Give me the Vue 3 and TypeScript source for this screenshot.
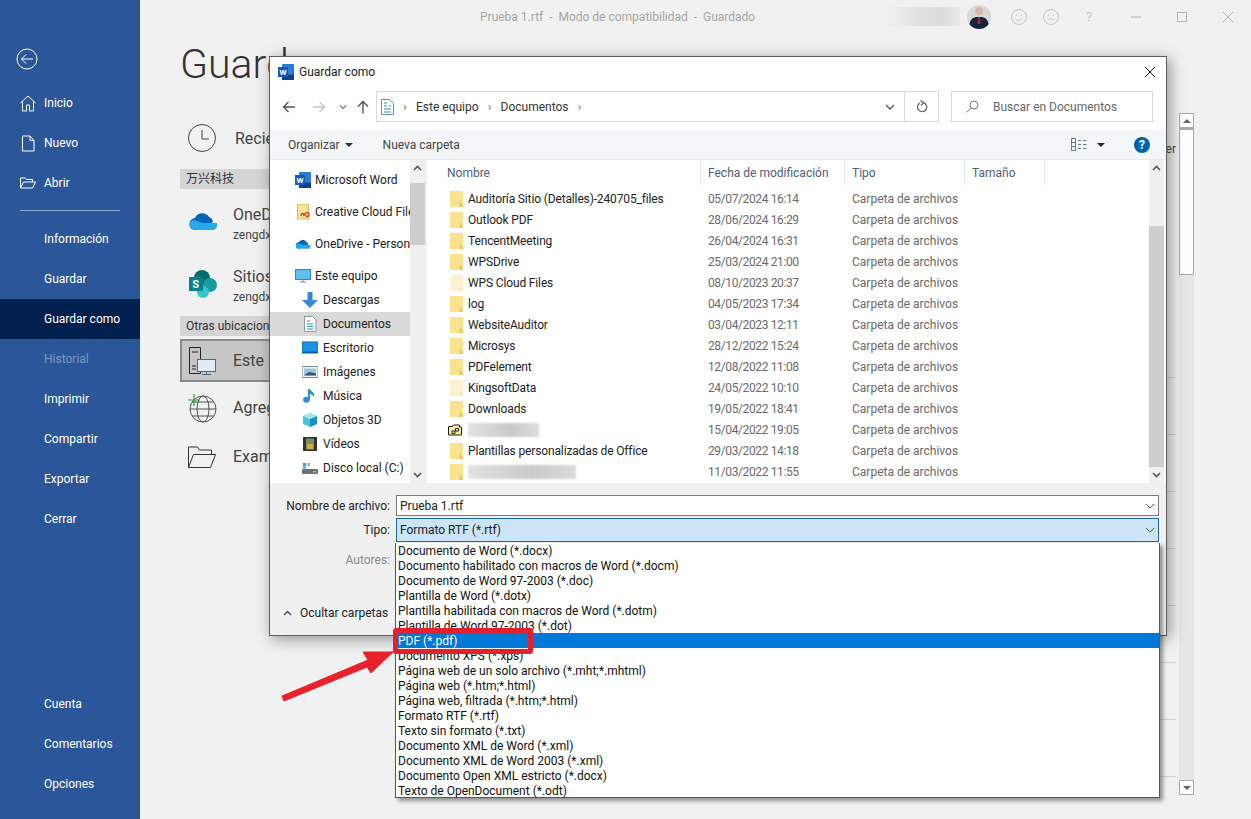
<script setup lang="ts">
const topNav = [
  { label: 'Información' },
  { label: 'Guardar' },
  { label: 'Guardar como', active: true },
  { label: 'Historial', muted: true },
  { label: 'Imprimir' },
  { label: 'Compartir' },
  { label: 'Exportar' },
  { label: 'Cerrar' },
]
const bottomNav = ['Cuenta', 'Comentarios', 'Opciones']

const navTree = [
  { label: 'Descargas', icon: 'down' },
  { label: 'Documentos', icon: 'doc', active: true },
  { label: 'Escritorio', icon: 'desk' },
  { label: 'Imágenes', icon: 'img' },
  { label: 'Música', icon: 'music' },
  { label: 'Objetos 3D', icon: 'cube' },
  { label: 'Vídeos', icon: 'film' },
  { label: 'Disco local (C:)', icon: 'disk' },
]

interface FileRow { name: string; date: string; pale?: boolean; blur?: number; shared?: boolean }
const files: FileRow[] = [
  { name: 'Auditoría Sitio (Detalles)-240705_files', date: '05/07/2024 16:14' },
  { name: 'Outlook PDF', date: '28/06/2024 16:29' },
  { name: 'TencentMeeting', date: '26/04/2024 16:31' },
  { name: 'WPSDrive', date: '25/03/2024 21:00' },
  { name: 'WPS Cloud Files', date: '08/10/2023 20:37', pale: true },
  { name: 'log', date: '04/05/2023 17:34' },
  { name: 'WebsiteAuditor', date: '03/04/2023 12:11' },
  { name: 'Microsys', date: '28/12/2022 15:24' },
  { name: 'PDFelement', date: '12/08/2022 11:08' },
  { name: 'KingsoftData', date: '24/05/2022 10:10', pale: true },
  { name: 'Downloads', date: '19/05/2022 18:41' },
  { name: '', date: '15/04/2022 19:05', blur: 71, shared: true },
  { name: 'Plantillas personalizadas de Office', date: '29/03/2022 14:18' },
  { name: '', date: '11/03/2022 11:55', blur: 108 },
]

const types = [
  'Documento de Word (*.docx)',
  'Documento habilitado con macros de Word (*.docm)',
  'Documento de Word 97-2003 (*.doc)',
  'Plantilla de Word (*.dotx)',
  'Plantilla habilitada con macros de Word (*.dotm)',
  'Plantilla de Word 97-2003 (*.dot)',
  'PDF (*.pdf)',
  'Documento XPS (*.xps)',
  'Página web de un solo archivo (*.mht;*.mhtml)',
  'Página web (*.htm;*.html)',
  'Página web, filtrada (*.htm;*.html)',
  'Formato RTF (*.rtf)',
  'Texto sin formato (*.txt)',
  'Documento XML de Word (*.xml)',
  'Documento XML de Word 2003 (*.xml)',
  'Documento Open XML estricto (*.docx)',
  'Texto de OpenDocument (*.odt)',
]
const lineCount = 10
</script>

<template>
  <div class="app">
    <aside class="side">
      <div class="back">
        <svg width="22" height="22" viewBox="0 0 22 22" fill="none" stroke="#fff" stroke-width="1">
          <circle cx="11" cy="11" r="10" />
          <path d="M5.500 11H17M10 6.500 5.500 11l4.500 4.500" />
        </svg>
      </div>
      <div class="side-item">
        <svg class="side-ico" width="16" height="17" viewBox="0 0 16 17" fill="none" stroke="#fff" stroke-width="1">
          <path d="M.5 8 8 1l7.500 7M2.500 6.500v9.500h4v-6h3v6h4V6.500" />
        </svg>
        <span>Inicio</span>
      </div>
      <div class="side-item">
        <svg class="side-ico" width="16" height="17" viewBox="0 0 16 17" fill="none" stroke="#fff" stroke-width="1">
          <path d="M2.500 1v15h11.500V5.500L10 1zM10 1v4.500h4" />
        </svg>
        <span>Nuevo</span>
      </div>
      <div class="side-item">
        <svg class="side-ico" width="16" height="12" viewBox="0 0 16 12" fill="none" stroke="#fff" stroke-width="1">
          <path d="M.5 11V1h5l1 1.500h6V5M.5 11l3-6h12l-3 6z" />
        </svg>
        <span>Abrir</span>
      </div>
      <div class="side-sep"></div>
      <div
        v-for="n in topNav"
        :key="n.label"
        class="side-item"
        :class="{ active: n.active, muted: n.muted }"
      >
        <span>{{ n.label }}</span>
      </div>
      <div class="side-spacer"></div>
      <div v-for="n in bottomNav" :key="n" class="side-item">
        <span>{{ n }}</span>
      </div>
    </aside>

    <main class="main">
      <header class="topbar">
        <div class="doc-title">Prueba 1.rtf&nbsp; -&nbsp; Modo de compatibilidad&nbsp; -&nbsp; Guardado</div>
        <div class="user-blur"></div>
        <svg class="avatar" width="24" height="24" viewBox="0 0 24 24">
          <defs><clipPath id="av"><circle cx="12" cy="12" r="12" /></clipPath></defs>
          <g clip-path="url(#av)">
            <rect width="24" height="24" fill="#d8d8d8" />
            <path d="M2 24c0-9 3-11 7-12h6c4 1 7 3 7 12z" fill="#17233b" />
            <circle cx="12" cy="6" r="4" fill="#d9b7a3" />
            <path d="M11 12h2l.5 7h-3z" fill="#8a2f3a" />
          </g>
        </svg>
        <svg class="face first" width="18" height="18" viewBox="0 0 18 18" fill="none" stroke="#c4c4c4">
          <circle cx="9" cy="9" r="7.500" />
          <path d="M5.500 10.500c1.500 2.500 5.500 2.500 7 0M6.500 6.500v1.500M11.500 6.500v1.500" />
        </svg>
        <svg class="face" width="18" height="18" viewBox="0 0 18 18" fill="none" stroke="#c4c4c4">
          <circle cx="9" cy="9" r="7.500" />
          <path d="M5.500 12.500c1.500-2.500 5.500-2.500 7 0M6.500 6.500v1.500M11.500 6.500v1.500" />
        </svg>
        <span class="q">?</span>
        <svg class="win first-win" width="12" height="12" viewBox="0 0 12 12" stroke="#b4b4b4" fill="none"><path d="M1 6h10" /></svg>
        <svg class="win" width="12" height="12" viewBox="0 0 12 12" stroke="#b4b4b4" fill="none"><rect x="1.500" y="1.500" width="9" height="9" /></svg>
        <svg class="win" width="12" height="12" viewBox="0 0 12 12" stroke="#b4b4b4" fill="none"><path d="m1 1 10 10M11 1 1 11" /></svg>
      </header>

      <div class="main-body">
        <div class="places">
          <h1 class="heading">Guardar como</h1>
          <div class="place recent">
            <svg width="30" height="30" viewBox="0 0 30 30" fill="none" stroke="#444">
              <circle cx="15" cy="15" r="13.500" />
              <path d="M15 7v9h7" />
            </svg>
            <span class="place-name">Recientes</span>
          </div>
          <div class="band first-band">万兴科技</div>
          <div class="place cloud">
            <svg width="30" height="20" viewBox="0 0 30 20">
              <path d="M8 18a6 6 0 0 1-1-12 8 8 0 0 1 14-1 6 6 0 0 1 4 5z" fill="#0364b8" />
              <path d="M7 18a5 5 0 0 1-1-10l9 3 14 0c1 3-1 7-4 7z" fill="#28a8ea" />
            </svg>
            <div class="place-txt"><span class="place-name">OneDrive</span><small>zengdx@wondershare.cn</small></div>
          </div>
          <div class="place cloud">
            <svg width="30" height="30" viewBox="0 0 30 30">
              <circle cx="14" cy="9" r="8" fill="#036c70" />
              <circle cx="22" cy="16" r="7" fill="#1a9ba1" />
              <circle cx="15" cy="23" r="6" fill="#37c6d0" />
              <rect x="1" y="8" width="14" height="14" rx="1" fill="#038387" />
              <text x="4.200" y="19" font-size="11" font-weight="700" fill="#fff" font-family="Roboto, sans-serif">S</text>
            </svg>
            <div class="place-txt"><span class="place-name">Sitios</span><small>zengdx@wondershare.cn</small></div>
          </div>
          <div class="band second-band">Otras ubicaciones</div>
          <div class="place selected">
            <svg width="30" height="30" viewBox="0 0 30 30" fill="none" stroke="#222">
              <path d="M1.500 1.500h11v26h-11zM4 6h6M4 20h4M4 23h4" />
              <rect x="9.500" y="13.500" width="18" height="12" fill="#e4eaf2" stroke="#4a6a90" />
              <path d="M18.500 25.500V28M14 28.500h9" stroke="#4a6a90" />
            </svg>
            <span class="place-name">Este PC</span>
          </div>
          <div class="place plain">
            <svg width="30" height="30" viewBox="0 0 30 30" fill="none" stroke="#555">
              <circle cx="16" cy="16" r="13" />
              <ellipse cx="16" cy="16" rx="6" ry="13" />
              <path d="M3 16h26M5 9h22M5 23h22" />
              <path d="M7 1v12M1 7h12" stroke="#2f9e44" stroke-width="1.200" />
            </svg>
            <span class="place-name">Agregar un sitio</span>
          </div>
          <div class="place plain">
            <svg width="30" height="24" viewBox="0 0 30 24" fill="none" stroke="#333">
              <path d="M1.500 22.500V2h9l2 3h12v4M1.500 22.500l5-13h22l-5 13z" />
            </svg>
            <span class="place-name">Examinar</span>
          </div>
        </div>

        <div class="right">
          <div class="ver">Ver</div>
          <div class="line tall"></div>
          <div v-for="i in lineCount" :key="i" class="line"></div>
        </div>

        <div class="vbar">
          <div class="vbtn"><i class="up"></i></div>
          <div class="vthumb"></div>
          <div class="vtrack"></div>
          <div class="vbtn"><i class="dn"></i></div>
        </div>
      </div>
    </main>

    <section class="dlg">
      <div class="dlg-title">
        <svg width="16" height="16" viewBox="0 0 16 16">
          <rect x="4" width="12" height="16" rx="1" fill="#2b7cd3" />
          <rect x="4" y="10.500" width="12" height="5.500" fill="#103f91" />
          <rect y="3" width="10" height="10" fill="#185abd" />
          <text x="1.500" y="11" font-size="8" font-weight="700" fill="#fff" font-family="Roboto, sans-serif">W</text>
        </svg>
        <span>Guardar como</span>
        <svg class="dlg-x" width="12" height="12" viewBox="0 0 12 12" stroke="#111" fill="none"><path d="m1 1 10 10M11 1 1 11" /></svg>
      </div>

      <div class="addr">
        <svg class="nav-btn" width="14" height="12" viewBox="0 0 14 12" fill="none" stroke="#555" stroke-width="1.400"><path d="M13 6H1.500M6.500 1l-5 5 5 5" /></svg>
        <svg class="nav-btn fwd" width="14" height="12" viewBox="0 0 14 12" fill="none" stroke="#c8c8c8" stroke-width="1.400"><path d="M1 6h11.500M7.500 1l5 5-5 5" /></svg>
        <svg class="nav-btn chev" width="8" height="6" viewBox="0 0 8 6" fill="none" stroke="#777" stroke-width="1.200"><path d="m1 1.500 3 3 3-3" /></svg>
        <svg class="nav-btn upb" width="12" height="14" viewBox="0 0 12 14" fill="none" stroke="#555" stroke-width="1.400"><path d="M6 13.500V1.500M1 6.500l5-5 5 5" /></svg>
        <div class="addr-box">
          <svg width="13" height="16" viewBox="0 0 13 16" fill="#fff" stroke="#7a8a99"><path d="M.5.500h8l4 4v11H.500z" /><path d="M3 7h3M3 10h7M3 13h7M8 7h2" stroke="#2a8fc0" /><path d="M3 4h3" stroke="#2a8fc0" /></svg>
          <span class="crumb-sep">›</span><span>Este equipo</span>
          <span class="crumb-sep">›</span><span>Documentos</span>
          <span class="crumb-sep">›</span>
          <svg class="addr-drop" width="10" height="6" viewBox="0 0 10 6" fill="none" stroke="#555" stroke-width="1.400"><path d="m1 1 4 4 4-4" /></svg>
        </div>
        <div class="addr-ref">
          <svg width="12" height="13" viewBox="0 0 12 13" fill="none" stroke="#666" stroke-width="1.300"><path d="M4 3a4.600 4.600 0 1 0 3.500-.3M4.500 .5 7.500 2.700 5 5.500" /></svg>
        </div>
        <div class="search">
          <svg width="13" height="13" viewBox="0 0 13 13" fill="none" stroke="#777"><circle cx="8" cy="5" r="4" /><path d="M5 8 .5 12.500" /></svg>
          <span>Buscar en Documentos</span>
        </div>
      </div>

      <div class="toolbar">
        <span class="tool">Organizar</span>
        <i class="caret org"></i>
        <span class="tool new">Nueva carpeta</span>
        <svg class="views" width="16" height="13" viewBox="0 0 16 13" fill="none" stroke="#6b7a88"><path d="M.5.500h4v12h-4zM.5 4.500h4M.5 8.500h4M7 2.500h3M12 2.500h3.500M7 6.500h3M12 6.500h3.500M7 10.500h3M12 10.500h3.500" /></svg>
        <i class="caret dark"></i>
        <span class="help">?</span>
      </div>

      <div class="browser">
        <div class="tree">
          <div class="tree-list">
            <div class="tree-root">
              <svg width="16" height="16" viewBox="0 0 16 16">
                <rect x="4" width="12" height="16" rx="1" fill="#2b7cd3" />
                <rect x="4" y="10.500" width="12" height="5.500" fill="#103f91" />
                <rect y="3" width="10" height="10" fill="#185abd" />
                <text x="1.500" y="11" font-size="8" font-weight="700" fill="#fff" font-family="Roboto, sans-serif">W</text>
              </svg>
              <span>Microsoft Word</span>
            </div>
            <div class="tree-root">
              <svg class="ico-cc" width="14" height="16" viewBox="0 0 14 16">
                <rect x=".5" y=".5" width="11" height="14.500" fill="#fce39a" stroke="#e2c060" />
                <path d="M4 12a2 2 0 0 1 2-2.500c2 0 2 3 4 3a2 2 0 0 0 0-4c-2 0-2 3-4 3" fill="none" stroke="#d2401f" stroke-width="1.300" />
              </svg>
              <span>Creative Cloud Files</span>
            </div>
            <div class="tree-root">
              <svg width="16" height="11" viewBox="0 0 30 20">
                <path d="M8 18a6 6 0 0 1-1-12 8 8 0 0 1 14-1 6 6 0 0 1 4 5z" fill="#0364b8" />
                <path d="M7 18a5 5 0 0 1-1-10l9 3 14 0c1 3-1 7-4 7z" fill="#28a8ea" />
              </svg>
              <span>OneDrive - Personal</span>
            </div>
            <div class="tree-root pc">
              <svg width="16" height="15" viewBox="0 0 16 15">
                <rect x=".5" y=".5" width="15" height="10" fill="#5cc0ee" stroke="#3a86b5" />
                <path d="M5 13h6M8 10.500V13" stroke="#7a8a99" fill="none" />
              </svg>
              <span>Este equipo</span>
            </div>
            <div
              v-for="t in navTree"
              :key="t.label"
              class="tree-child"
              :class="{ active: t.active }"
            >
              <svg class="tree-ico" width="16" height="16" viewBox="0 0 16 16">
                <template v-if="t.icon === 'down'">
                  <path d="M5.500 0h5v8H16l-8 8-8-8h5.500z" fill="#3a87d6" />
                </template>
                <template v-else-if="t.icon === 'doc'">
                  <path d="M2.500.5h8l3.500 3.500v11.500H2.500z" fill="#fff" stroke="#8a98a5" />
                  <path d="M5 5h3M5 8h6M5 10.500h6M5 13h6" stroke="#2a8fc0" fill="none" />
                </template>
                <template v-else-if="t.icon === 'desk'">
                  <rect y="2" width="16" height="11" fill="#1e90e8" stroke="#1565a8" />
                  <rect x="1" y="11.500" width="14" height="1.500" fill="#0f5ea8" />
                </template>
                <template v-else-if="t.icon === 'img'">
                  <rect y="2.500" width="16" height="11" fill="#f3f5f7" stroke="#7a8894" />
                  <rect x="2" y="4.500" width="12" height="7" fill="#9ec3dc" />
                  <path d="M2 11.500 7 8l7 1.500v2z" fill="#34566f" />
                </template>
                <template v-else-if="t.icon === 'music'">
                  <path d="M8 1v10.500a3.500 3 0 1 1-2-2.500V1z" fill="#2a8fd8" />
                  <path d="M8 1c1 3 5 3 4 8-1-2-3-3-4-3z" fill="#2a8fd8" />
                </template>
                <template v-else-if="t.icon === 'cube'">
                  <path d="M8 1 15 4v8l-7 3-7-3V4z" fill="#4cc4d8" />
                  <path d="M8 7 15 4v8l-7 3z" fill="#1c90c0" />
                  <path d="M8 1 15 4 8 7 1 4z" fill="#a8e6ee" />
                </template>
                <template v-else-if="t.icon === 'film'">
                  <rect x="1" y="1" width="14" height="14" fill="#333" />
                  <rect x="4" y="2.500" width="8" height="11" fill="#7a8f55" />
                  <path d="M5 8h6v5H5z" fill="#d8a838" />
                </template>
                <template v-else>
                  <rect y="9" width="16" height="5" rx="1" fill="#6a6f75" />
                  <rect x="1" y="3" width="3" height="3" fill="#2aa7de" />
                  <rect x="5" y="3" width="3" height="3" fill="#7fc5e8" />
                  <rect x="1" y="6.500" width="3" height="2" fill="#2aa7de" />
                  <rect x="11" y="11" width="3" height="1.500" fill="#7de07d" />
                </template>
              </svg>
              <span>{{ t.label }}</span>
            </div>
          </div>
          <div class="sbar">
            <svg class="sarrow" width="9" height="6" viewBox="0 0 9 6" fill="none" stroke="#555" stroke-width="1.600"><path d="m1 5 3.500-3.500L8 5" /></svg>
            <div class="sthumb tree-thumb"></div>
            <div class="sfill"></div>
            <svg class="sarrow" width="9" height="6" viewBox="0 0 9 6" fill="none" stroke="#555" stroke-width="1.600"><path d="m1 1 3.500 3.500L8 1" /></svg>
          </div>
        </div>

        <div class="list">
          <div class="list-main">
            <div class="cols">
              <span class="c-name">Nombre</span>
              <span class="c-date">Fecha de modificación</span>
              <span class="c-type">Tipo</span>
              <span class="c-size">Tamaño</span>
            </div>
            <div v-for="f in files" :key="f.date" class="row">
              <svg v-if="f.shared" class="fold shared" width="14" height="12" viewBox="0 0 14 12">
                <path d="M.5 2.500h4l1-1.500h6v2h2v8h-13z" fill="#fce9a8" stroke="#222" />
                <path d="M4 7h3v2.500H4zM7.500 4.500h3V7h-3z" fill="none" stroke="#222" />
              </svg>
              <svg v-else class="fold" :class="{ pale: f.pale }" width="13" height="16" viewBox="0 0 13 16">
                <rect width="13" height="16" fill="#fbe28e" />
                <path d="M9.500 16V10L13 14v2z" fill="#e9c866" />
              </svg>
              <span v-if="f.blur" class="blurred" :style="{ width: f.blur + 'px' }"></span>
              <span v-else class="fname">{{ f.name }}</span>
              <span class="fdate">{{ f.date }}</span>
              <span class="ftype">Carpeta de archivos</span>
            </div>
          </div>
          <div class="sbar list-bar">
            <svg class="sarrow" width="9" height="6" viewBox="0 0 9 6" fill="none" stroke="#555" stroke-width="1.600"><path d="m1 5 3.500-3.500L8 5" /></svg>
            <div class="sgap"></div>
            <div class="sthumb list-thumb"></div>
            <svg class="sarrow" width="9" height="6" viewBox="0 0 9 6" fill="none" stroke="#555" stroke-width="1.600"><path d="m1 1 3.500 3.500L8 1" /></svg>
          </div>
        </div>
      </div>

      <div class="form">
        <div class="field">
          <label>Nombre de archivo:</label>
          <div class="inp">Prueba 1.rtf
            <svg width="10" height="6" viewBox="0 0 10 6" fill="none" stroke="#555"><path d="m1 1 4 4 4-4" /></svg>
          </div>
        </div>
        <div class="field">
          <label>Tipo:</label>
          <div class="inp combo">Formato RTF (*.rtf)
            <svg width="10" height="6" viewBox="0 0 10 6" fill="none" stroke="#555"><path d="m1 1 4 4 4-4" /></svg>
          </div>
        </div>
        <div class="field meta"><label class="grey">Autores:</label></div>
        <div class="hide">
          <svg width="9" height="6" viewBox="0 0 9 6" fill="none" stroke="#555" stroke-width="1.500"><path d="m1 5 3.500-3.500L8 5" /></svg>
          <span>Ocultar carpetas</span>
        </div>
      </div>
    </section>

    <ul class="drop">
      <li v-for="(t, i) in types" :key="t" :class="{ sel: i === 6 }">{{ t }}</li>
    </ul>

    <div class="hilite"></div>
    <svg class="arrow" width="120" height="56" viewBox="0 0 120 56">
      <path d="M2 49 4 54 87 20 91 26 113 5 83 5 88 13z" fill="#e8212c" stroke="#e8212c" stroke-linejoin="round" />
    </svg>
  </div>
</template>

<style scoped>
.app {
  position: relative;
  width: 1251px;
  height: 819px;
  overflow: hidden;
  display: flex;
  background: #f1f1f1;
  font-family: Roboto, "Noto Sans CJK SC", sans-serif;
  font-size: 12px;
  color: #222;
}
.side {
  width: 140px;
  flex: none;
  background: #2b579a;
  color: #fff;
  display: flex;
  flex-direction: column;
  padding: 48px 0 15px;
  box-sizing: border-box;
}
.back { height: 35px; padding-left: 16px; }
.side-item {
  height: 40px;
  flex: none;
  display: flex;
  align-items: center;
  padding-left: 44px;
  position: relative;
}
.side-ico { position: absolute; left: 20px; top: 12px; }
.side-item:nth-child(4) .side-ico { top: 14px; }
.side-item.active { background: #002050; }
.side-item.muted { color: #7c97c0; }
.side-sep { height: 1px; background: #8ea7cb; margin: 7px 20px 8px; flex: none; }
.side-spacer { flex: 1; }

.main { flex: 1; display: flex; flex-direction: column; min-width: 0; }
.topbar { height: 33px; display: flex; align-items: center; flex: none; color: #a6a6a6; }
.doc-title { margin-left: 340px; font-size: 12px; width: 405px; white-space: nowrap; }
.user-blur {
  width: 75px;
  height: 19px;
  background: linear-gradient(90deg, #f1f1f1, #e2e2e2 40%, #dcdcdc 75%, #e8e8e8);
  filter: blur(.5px);
}
.avatar { margin-left: 7px; }
.face { margin-left: 14px; }
.face.first { margin-left: 19px; }
.q { margin-left: 26px; width: 20px; font-size: 13px; color: #c4c4c4; }
.win { margin-left: 34px; }
.win.first-win { margin-left: 24px; }

.main-body { flex: 1; display: flex; min-height: 0; }
.places { width: 320px; padding-left: 40px; flex: none; box-sizing: border-box; }
.heading {
  margin: 0;
  height: 85px;
  font-size: 41px;
  line-height: 62px;
  font-weight: 300;
  color: #333;
  white-space: nowrap;
}
.place { display: flex; align-items: center; font-size: 16px; color: #444; }
.place svg { flex: none; }
.place-name { white-space: nowrap; }
.recent { height: 40px; gap: 18px; padding-left: 7px; }
.band {
  height: 20px;
  line-height: 20px;
  background: #d4d4d4;
  padding-left: 6px;
  font-size: 12px;
  color: #333;
  white-space: nowrap;
}
.first-band { margin-top: 11px; }
.second-band { margin-top: 1px; }
.cloud { height: 62px; gap: 22px; padding-left: 8px; }
.first-band + .cloud { margin-top: 2px; }
.cloud small { display: block; font-size: 12px; color: #444; white-space: nowrap; }
.place-txt { display: flex; flex-direction: column; line-height: 20px; margin-left: -7px; padding-top: 6px; }
.selected {
  margin-top: 3px;
  height: 43px;
  background: #c6c6c6;
  border: 2px solid #8a8a8a;
  box-sizing: border-box;
  gap: 15px;
  padding-left: 6px;
}
.plain { height: 47px; gap: 16px; padding-left: 7px; margin-top: 2px; }

.right { flex: 1; padding-top: 102px; }
.ver { text-align: right; height: 132px; line-height: 28px; font-size: 12px; color: #444; }
.line { height: 56px; border-bottom: 1px solid #d2d2d2; }
.line.tall { height: 110px; }
.vbar {
  width: 15px;
  margin: 80px 57px 24px 3px;
  display: flex;
  flex-direction: column;
  background: #e6e6e6;
  flex: none;
}
.vbtn {
  height: 15px;
  background: #fff;
  border: 1px solid #ababab;
  box-sizing: border-box;
  display: flex;
  align-items: center;
  justify-content: center;
  flex: none;
}
.up, .dn { width: 0; height: 0; border-left: 4px solid transparent; border-right: 4px solid transparent; }
.up { border-bottom: 4px solid #666; }
.dn { border-top: 4px solid #666; }
.vthumb { height: 147px; background: #fff; border: 1px solid #ababab; border-top-width: 2px; box-sizing: border-box; flex: none; }
.vtrack { flex: 1; }

.dlg {
  position: absolute;
  left: 269px;
  top: 56px;
  width: 898px;
  height: 580px;
  box-sizing: border-box;
  background: #f0f0f0;
  border: 1px solid #5f5f5f;
  box-shadow: 3px 3px 14px rgba(0, 0, 0, .4);
  display: flex;
  flex-direction: column;
}
.dlg-title {
  height: 30px;
  background: #fff;
  display: flex;
  align-items: center;
  gap: 5px;
  padding-left: 8px;
  position: relative;
  flex: none;
  font-size: 12px;
}
.dlg-x { position: absolute; right: 10px; top: 9px; }
.addr {
  height: 43px;
  background: #fff;
  display: flex;
  align-items: center;
  flex: none;
  padding-bottom: 8px;
  box-sizing: border-box;
  padding-top: 4px;
  color: #333;
}
.nav-btn { margin-left: 12px; flex: none; }
.nav-btn.fwd { margin-left: 16px; }
.nav-btn.chev { margin-left: 13px; }
.nav-btn.upb { margin-left: 10px; }
.addr-box {
  margin-left: 7px;
  width: 529px;
  height: 31px;
  border: 1px solid #d9d9d9;
  box-sizing: border-box;
  display: flex;
  align-items: center;
  padding-left: 4px;
  position: relative;
  flex: none;
}
.crumb-sep { color: #777; width: 22px; text-align: center; font-size: 13px; }
.addr-drop { position: absolute; right: 9px; top: 12px; }
.addr-ref {
  width: 34px;
  height: 31px;
  border: 1px solid #d9d9d9;
  border-left: none;
  box-sizing: border-box;
  display: flex;
  align-items: center;
  justify-content: center;
  flex: none;
}
.search {
  margin-left: 12px;
  width: 202px;
  height: 31px;
  border: 1px solid #d9d9d9;
  box-sizing: border-box;
  display: flex;
  align-items: center;
  gap: 14px;
  padding-left: 14px;
  color: #666;
  flex: none;
}
.toolbar {
  height: 30px;
  background: #f5f6f7;
  border-bottom: 1px solid #e8e8e8;
  box-sizing: border-box;
  display: flex;
  align-items: center;
  flex: none;
  color: #444;
}
.tool { margin-left: 18px; }
.tool.new { margin-left: 30px; flex: 1; }
.caret { width: 0; height: 0; border-left: 4px solid transparent; border-right: 4px solid transparent; border-top: 4px solid #333; margin-left: 5px; }
.caret.dark { border-top-color: #1b2a3a; margin-left: 10px; }
.help {
  width: 16px;
  height: 16px;
  border-radius: 50%;
  background: #0063b1;
  color: #fff;
  font-weight: 700;
  font-size: 12px;
  line-height: 16px;
  text-align: center;
  margin: 0 16px 0 29px;
}

.browser { height: 324px; display: flex; flex: none; background: #fff; border-bottom: 1px solid #f0f0f0; box-sizing: border-box; }
.tree { width: 155px; display: flex; flex: none; border-right: 2px solid #f0f0f0; box-sizing: content-box; }
.tree-list { width: 140px; flex: none; overflow: hidden; padding-top: 4px; }
.tree-root {
  height: 32px;
  display: flex;
  align-items: center;
  gap: 4px;
  padding-left: 25px;
  white-space: nowrap;
  color: #222;
}
.tree-root svg { flex: none; }
.tree-root.pc { height: 24px; margin-top: 4px; }
.ico-cc { margin-left: 2px; }
.tree-child {
  height: 24px;
  display: flex;
  align-items: center;
  gap: 5px;
  padding-left: 32px;
  white-space: nowrap;
  color: #222;
}
.tree-ico { flex: none; }
.tree-child.active { background: #d9d9d9; }
.sbar { width: 15px; flex: none; display: flex; flex-direction: column; align-items: center; background: #f0f0f0; }
.sarrow { margin: 5px 0; flex: none; }
.sthumb { width: 100%; background: #cdcdcd; flex: none; }
.tree-thumb { height: 62px; margin-top: 7px; }
.sfill { flex: 1; }
.list { flex: 1; display: flex; min-width: 0; }
.list-main { flex: 1; min-width: 0; }
.list-bar { margin-left: 2px; margin-right: 2px; }
.sgap { height: 50px; flex: none; }
.list-thumb { flex: 1; }
.cols {
  height: 27px;
  display: grid;
  grid-template-columns: 274px 144px 120px 80px;
  color: #4c607a;
  margin-bottom: 1px;
}
.cols span { display: flex; align-items: center; padding-left: 7px; border-right: 1px solid #e5e5e5; box-sizing: border-box; height: 26px; }
.cols .c-name { padding-left: 20px; }
.row { height: 21px; display: flex; align-items: center; position: relative; white-space: nowrap; }
.fold { margin-left: 23px; flex: none; margin-right: 5px; }
.fold.pale { opacity: .42; }
.fold.shared { margin-left: 21px; margin-right: 6px; }
.fname { flex: none; letter-spacing: -.14px; }
.blurred {
  height: 14px;
  background: linear-gradient(90deg, #e2e2e2, #c9c9c9 60%, #dcdcdc);
  filter: blur(1px);
  flex: none;
}
.fdate { position: absolute; left: 281px; color: #6a6a6a; letter-spacing: -.38px; }
.ftype { position: absolute; left: 425px; color: #6a6a6a; }

.form { flex: 1; padding: 11px 7px 0 0; position: relative; }
.field { display: flex; align-items: center; height: 21px; margin-bottom: 3px; }
.field label { width: 120px; text-align: right; padding-right: 5px; flex: none; color: #222; }
.field label.grey { color: #8a8a8a; }
.field.meta { margin-top: 9px; }
.inp {
  flex: 1;
  height: 21px;
  background: #fff;
  border: 1px solid #7a7a7a;
  box-sizing: border-box;
  display: flex;
  align-items: center;
  justify-content: space-between;
  padding: 0 3px;
  margin-left: 1px;
}
.combo { height: 24px; background: #cce4f7; border-color: #1c6a9a; }
.hide { position: absolute; left: 13px; top: 122px; display: flex; align-items: center; gap: 8px; color: #222; }

.drop {
  position: absolute;
  left: 395px;
  top: 543px;
  width: 765px;
  height: 255px;
  margin: 0;
  padding: 0;
  list-style: none;
  background: #fff;
  border: 1px solid #1f6a94;
  border-top: none;
  box-sizing: border-box;
  box-shadow: 3px 3px 4px rgba(0, 0, 0, .4);
}
.drop li { height: 15px; line-height: 17px; padding-left: 2px; white-space: nowrap; color: #111; }
.drop li.sel { background: #0078d7; color: #fff; }
.hilite {
  position: absolute;
  left: 393px;
  top: 628px;
  width: 140px;
  height: 26px;
  box-sizing: border-box;
  border: 5px solid #e3202d;
  border-radius: 3px;
}
.arrow { position: absolute; left: 280px; top: 647px; }
</style>
